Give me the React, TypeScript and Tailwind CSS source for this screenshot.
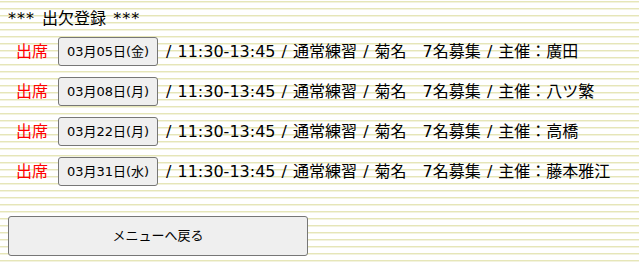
const rows = [
  { date: '03月05日(金)', host: '廣田' },
  { date: '03月08日(月)', host: '八ツ繁' },
  { date: '03月22日(月)', host: '高橋' },
  { date: '03月31日(水)', host: '藤本雅江' },
]

export default function App() {
  return (
    <div className="min-h-screen bg-white bg-[image:repeating-linear-gradient(to_bottom,transparent_0px,transparent_1px,#e6e6b8_1px,#e6e6b8_2px,#f3f3df_2px,#f3f3df_3px,transparent_3px,transparent_7px)] font-['DejaVu_Sans','Noto_Sans_CJK_JP',sans-serif] text-black">
      <div className="pl-2 pt-[7px]">
        <div className="text-[16px] leading-[24px] [word-spacing:2px]">
          <span className="tracking-[1px]">***</span> 出欠登録 <span className="tracking-[1px]">***</span>
        </div>

        <div className="mt-[6px] flex flex-col gap-[11px]">
          {rows.map(r => (
            <div key={r.date} className="flex items-center pl-2 text-[16px]">
              <span className="text-[#ff0000]">出席</span>
              <button className="ml-[10px] mr-[8px] h-[29px] w-[100px] rounded-[3px] border border-[#767676] bg-[#efefef] text-[13px] text-black">
                {r.date}
              </button>
              <span className="whitespace-pre [word-spacing:1px]">
                / 11:30-13:45 / 通常練習 / 菊名　7名募集 / 主催：{r.host}
              </span>
            </div>
          ))}
        </div>

        <button className="mt-[30px] h-[40px] w-[300px] rounded-[3px] border border-[#767676] bg-[#efefef] text-[13px] text-black">
          メニューへ戻る
        </button>
      </div>
    </div>
  )
}
